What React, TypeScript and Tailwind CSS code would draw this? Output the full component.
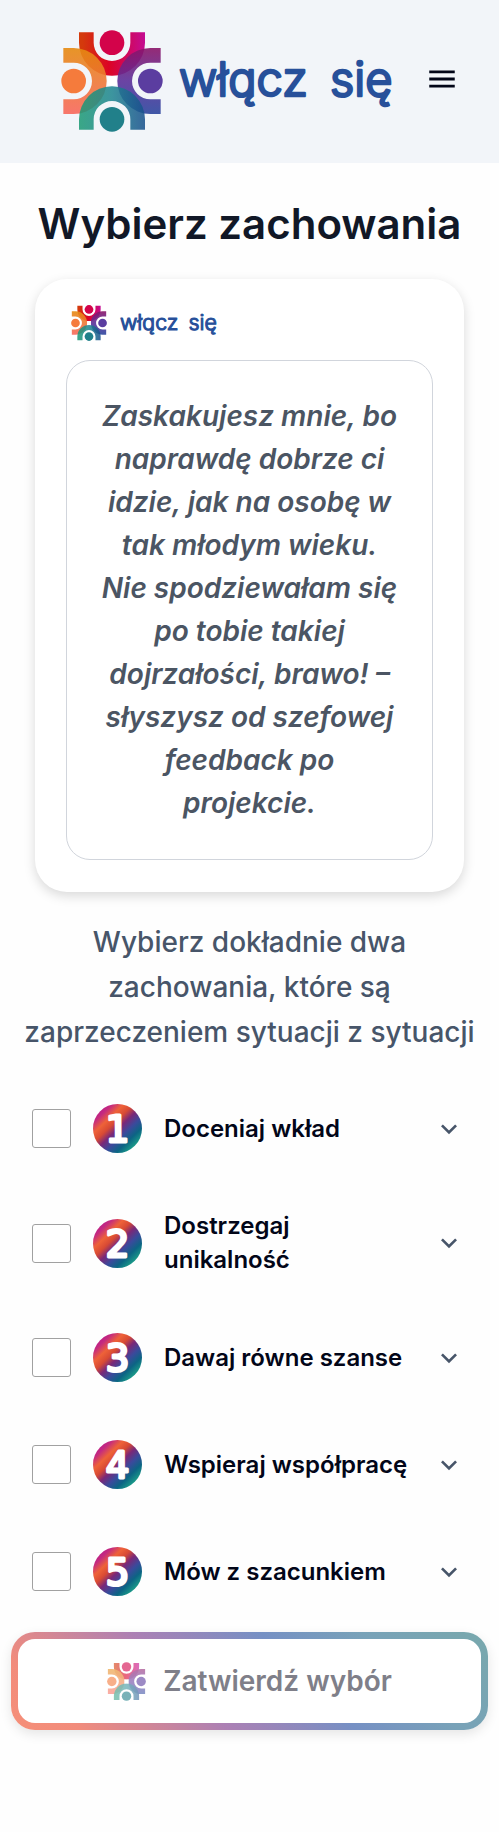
import { useState } from 'react';
import { MdKeyboardArrowDown, MdMenu } from 'react-icons/md';

const BEHAVIOURS = [
  { id: 1, name: 'Doceniaj wkład' },
  { id: 2, name: 'Dostrzegaj unikalność' },
  { id: 3, name: 'Dawaj równe szanse' },
  { id: 4, name: 'Wspieraj współpracę' },
  { id: 5, name: 'Mów z szacunkiem' },
];

// One person of the emblem: shoulders with a round cutout, rotated around the centre
const PERSON = 'M-99 -146 H-55 V-115 A55 55 0 0 0 55 -115 V-146 H99 V-115 A99 99 0 0 1 -99 -115 Z';

const Emblem = ({ id, className }: { id: string; className: string }) => (
  <svg viewBox="-153 -153 306 306" className={className} aria-hidden="true">
    <defs>
      <linearGradient id={`${id}-top`}>
        <stop offset="0.05" stopColor="#d43a0c" />
        <stop offset="0.45" stopColor="#dc0424" />
        <stop offset="1" stopColor="#c40c92" />
      </linearGradient>
      <linearGradient id={`${id}-left`}>
        <stop offset="0" stopColor="#f8685c" />
        <stop offset="1" stopColor="#e68a10" />
      </linearGradient>
      <linearGradient id={`${id}-right`}>
        <stop offset="0" stopColor="#8a1468" />
        <stop offset="0.5" stopColor="#5c309a" />
        <stop offset="1" stopColor="#2c469e" />
      </linearGradient>
      <linearGradient id={`${id}-bottom`}>
        <stop offset="0" stopColor="#18508c" />
        <stop offset="0.5" stopColor="#1f8590" />
        <stop offset="1" stopColor="#1c9a74" />
      </linearGradient>
    </defs>
    <path d={PERSON} fill={`url(#${id}-top)`} />
    <path d={PERSON} fill={`url(#${id}-left)`} opacity="0.9" transform="rotate(-90)" />
    <path d={PERSON} fill={`url(#${id}-right)`} opacity="0.9" transform="rotate(90)" />
    <path d={PERSON} fill={`url(#${id}-bottom)`} opacity="0.86" transform="rotate(180)" />
    <rect x="-14" y="-14" width="28" height="28" fill="#fff" />
    <circle cy="-115" r="37" fill="#d3034a" />
    <circle cx="-115" r="37" fill="#f57b3c" />
    <circle cx="115" r="37" fill="#5b3da0" />
    <circle cy="115" r="37" fill="#21808a" />
  </svg>
);

const Wordmark = ({ className }: { className: string }) => (
  <svg viewBox="-2 -10 220 74" className={className} role="img" aria-label="włącz się">
    <g
      className="font-light [font-feature-settings:'cv11']"
      fontFamily="Inter, sans-serif"
      fontSize="47"
      fill="#27509a"
      stroke="#27509a"
      strokeWidth="2.5"
      strokeLinejoin="round"
    >
      <text x="0" y="42">włącz</text>
      <text x="151" y="42">się</text>
    </g>
  </svg>
);

const NumberBadge = ({ value }: { value: number }) => (
  <svg viewBox="0 0 49 49" className="size-[49px] shrink-0" aria-hidden="true">
    <defs>
      <linearGradient id={`badge-${value}`} x1="0.08" y1="0.08" x2="0.88" y2="0.92">
        <stop offset="0" stopColor="#b8148c" />
        <stop offset="0.14" stopColor="#c42a80" />
        <stop offset="0.28" stopColor="#ee6238" />
        <stop offset="0.4" stopColor="#d84a34" />
        <stop offset="0.52" stopColor="#7a2878" />
        <stop offset="0.66" stopColor="#3a4a9c" />
        <stop offset="0.8" stopColor="#0c6484" />
        <stop offset="1" stopColor="#20b08a" />
      </linearGradient>
    </defs>
    <circle cx="24.5" cy="24.5" r="24.5" fill={`url(#badge-${value})`} />
    <text
      x="24.5"
      y="38"
      textAnchor="middle"
      fontFamily="'DejaVu Sans', sans-serif"
      fontSize="37"
      fill="#fff"
      stroke="#fff"
      strokeWidth="3"
      strokeLinejoin="round"
    >
      {value}
    </text>
  </svg>
);

const Header = () => (
  <header className="flex items-center justify-between bg-[#f2f5f9] pt-[30px] pr-10 pb-[31px] pl-[61px]">
    <a href="#" className="flex items-center gap-[14px]">
      <Emblem id="header" className="size-[102px]" />
      <Wordmark className="w-[220px]" />
    </a>
    <button type="button" aria-label="Menu" className="-mt-1 text-slate-950">
      <MdMenu size={34} />
    </button>
  </header>
);

const ScenarioCard = () => (
  <section className="mx-[35px] mt-[27px] rounded-[32px] bg-white px-[31px] pt-[26px] pb-8 shadow-[0_4px_12px_rgba(0,0,0,0.15)]">
    <div className="mb-[19px] ml-[5px] flex items-center gap-3">
      <Emblem id="card" className="size-9" />
      <Wordmark className="w-[100px]" />
    </div>
    <blockquote className="rounded-3xl border border-gray-300 px-8 py-[34px] text-center text-[28px] leading-[43px] font-semibold text-[#4b5563] italic">
      Zaskakujesz mnie, bo naprawdę dobrze ci idzie, jak na osobę w tak młodym wieku. Nie
      spodziewałam się po tobie takiej dojrzałości, brawo! – słyszysz od szefowej feedback po
      projekcie.
    </blockquote>
  </section>
);

const App = () => {
  const [selected, setSelected] = useState<number[]>([]);

  const toggle = (id: number) => {
    setSelected(prev => (prev.includes(id) ? prev.filter(s => s !== id) : [...prev, id]));
  };

  return (
    <div className="min-h-screen bg-[#fefefe] font-['Inter',sans-serif]">
      <Header />

      <main className="pb-[102px]">
        <h1 className="pt-[33px] text-center text-[42px] leading-[56px] font-semibold text-[#111827]">
          Wybierz zachowania
        </h1>

        <ScenarioCard />

        <p className="mt-7 px-5 text-center text-[28px] leading-[45px] font-medium text-[#475569]">
          Wybierz dokładnie dwa zachowania, które są zaprzeczeniem sytuacji z sytuacji
        </p>

        <ul className="mt-5 pr-[34px] pl-8">
          {BEHAVIOURS.map(behaviour => (
            <li key={behaviour.id} className="flex items-center py-[27px]">
              <input
                id={`behaviour-${behaviour.id}`}
                type="checkbox"
                checked={selected.includes(behaviour.id)}
                onChange={() => toggle(behaviour.id)}
                className="size-[39px] shrink-0 appearance-none rounded-[3px] border border-neutral-400 bg-white checked:bg-slate-600"
              />
              <div className="flex min-h-[53px] flex-1 items-center pl-[22px]">
                <NumberBadge value={behaviour.id} />
                <label
                  htmlFor={`behaviour-${behaviour.id}`}
                  className="flex-1 px-[22px] text-2xl leading-[34px] font-semibold text-slate-950"
                >
                  {behaviour.name}
                </label>
                <button type="button" aria-label="Rozwiń" className="text-[#475569]">
                  <MdKeyboardArrowDown size={32} />
                </button>
              </div>
            </li>
          ))}
        </ul>

        <div className="mx-[11px] mt-[7px] rounded-3xl bg-[linear-gradient(45deg,#f58f78_0%,#f28c7c_12%,#ac80b4_38%,#7690c4_60%,#78a2b8_78%,#78a8ac_100%)] p-[7px] shadow-[0_4px_12px_rgba(0,0,0,0.1)]">
          <button
            type="button"
            disabled={selected.length !== 2}
            className="flex h-[84px] w-full items-center justify-center gap-[17px] rounded-[17px] bg-white text-[28px] font-semibold text-slate-950 disabled:text-[#7f7f89]"
          >
            <Emblem id="submit" className="size-[39px] opacity-60" />
            Zatwierdź wybór
          </button>
        </div>
      </main>
    </div>
  );
};

export default App;
